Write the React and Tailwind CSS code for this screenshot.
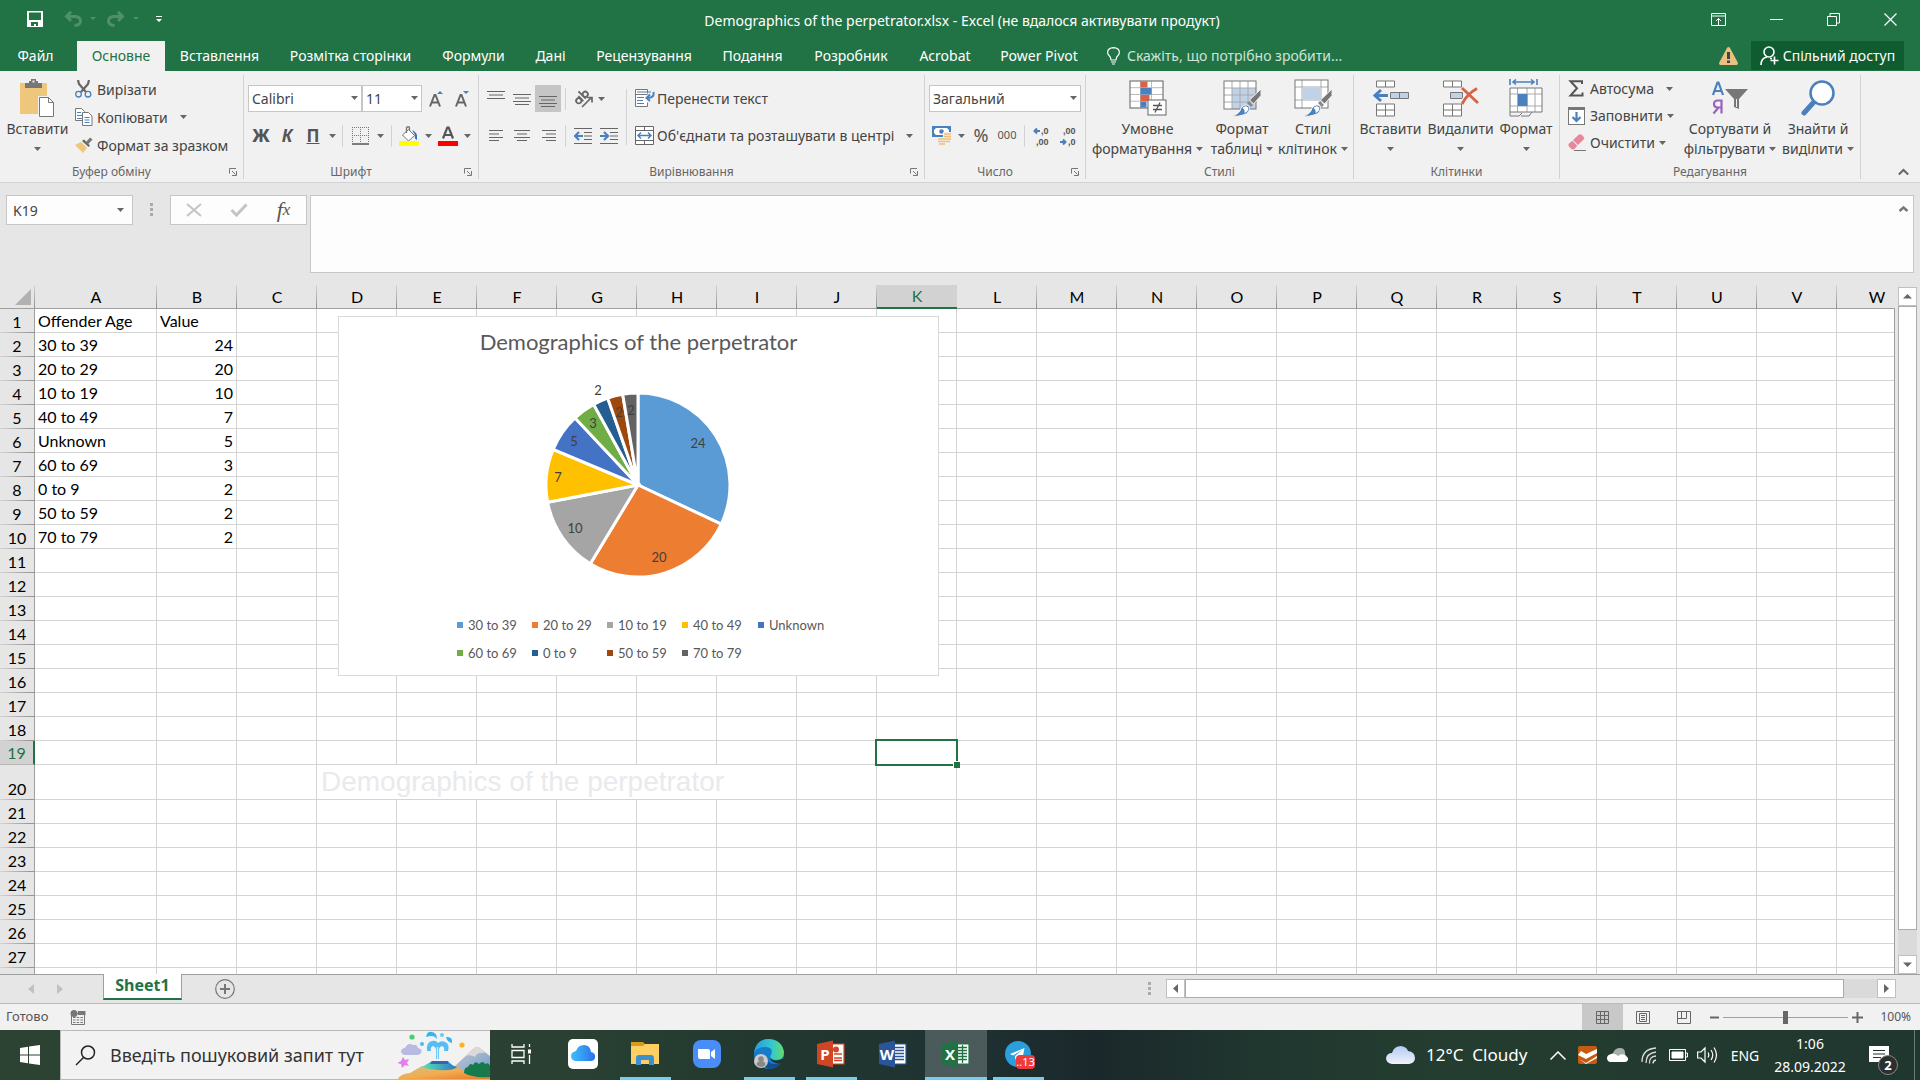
import React from "react";

const UI = "font-['Noto_Sans',sans-serif]";

const Caret = ({ className = "" }) => (
  <svg className={`shrink-0 ${className}`} width="7" height="4" viewBox="0 0 7 4" fill="#666" aria-hidden="true">
    <path d="M0 0h7L3.5 4z" />
  </svg>
);

const Sep = ({ className = "" }) => <div className={`w-px bg-[#d2d2d2] shrink-0 ${className}`} />;

const Launcher = () => (
  <svg width="8" height="8" viewBox="0 0 8 8" fill="none" stroke="#777" aria-hidden="true">
    <path d="M.5 5.500V.5H7M3 3l3.500 3.500M7.500 3v4.500H3" />
  </svg>
);

/* ---------- ribbon icons ---------- */

const PasteIcon = () => (
  <svg width="35" height="39" viewBox="0 0 35 39">
    <rect x="0" y="4" width="27" height="31" fill="#eec77d" />
    <path d="M5 4h4V2h2V0h5v2h2v2h4v5H5z" fill="#777" />
    <rect x="12.500" y="1.500" width="2" height="2" fill="#f1f1f1" />
    <path d="M18 17h11l6 6v16H18z" fill="#f1f1f1" />
    <path d="M19.500 18.500h9l5 5v14h-14z" fill="#fff" stroke="#777" />
    <path d="M28.500 18.500v5h5" fill="none" stroke="#777" />
  </svg>
);

const CutIcon = () => (
  <svg width="17" height="18" viewBox="0 0 17 18" fill="none">
    <path d="M3 0l1 4 7 8M14 0l-1 4-7 8" stroke="#666" strokeWidth="2.200" />
    <circle cx="3.500" cy="14.200" r="2.800" stroke="#4a80bd" strokeWidth="1.300" />
    <circle cx="13" cy="14.200" r="2.800" stroke="#4a80bd" strokeWidth="1.300" />
  </svg>
);

const CopyIcon = () => (
  <svg width="18" height="18" viewBox="0 0 18 18" fill="none">
    <path d="M.5.500h6l3 3v9h-9z" fill="#fff" stroke="#777" />
    <path d="M2 4.500h4M2 7.500h5M2 10.500h5" stroke="#4a80bd" />
    <path d="M7.500 4.500h6l3.500 3.500v9.500H7.500z" fill="#fff" stroke="#777" />
    <path d="M9.500 9.500h5M9.500 12h5M9.500 14.500h5" stroke="#4a80bd" />
  </svg>
);

const BrushIcon = () => (
  <svg width="18" height="16" viewBox="0 0 18 16">
    <path d="M0 8l6-3 6 6-4 5z" fill="#eec77d" />
    <path d="M7 4l2-1.500 6 6L13.500 10z" fill="#666" />
    <path d="M11 5l4-4.500 2.500 2L13.500 7z" fill="#777" />
  </svg>
);

const GrowIcon = ({ down }) => (
  <svg width="15" height="18" viewBox="0 0 15 18" fill="none">
    <path d="M1 16.500L5.500 5h1L11 16.500M2.800 12.500h6.400" stroke="#666" strokeWidth="2" />
    <path d={down ? "M8 1h6l-3 3z" : "M8 4h6l-3-3z"} fill="#4a80bd" />
  </svg>
);

const BordersIcon = () => (
  <svg width="17" height="18" viewBox="0 0 17 18" fill="none" stroke="#777">
    <path d="M0 .5h17M0 8.500h17M.5 0v16M8.500 0v16M16.500 0v16" strokeDasharray="1 1" />
    <path d="M0 17h17" strokeWidth="1.500" stroke="#555" />
  </svg>
);

const FillIcon = () => (
  <svg width="20" height="20" viewBox="0 0 20 20" fill="none">
    <path d="M3.500 9l6-5.500 6 6-6 5.500z" fill="#fff" stroke="#777" />
    <path d="M7.500 7V1.500q2-1.500 3 0V5" stroke="#777" strokeWidth="1.300" />
    <path d="M13 4q6 2 5 10-3-1-2-5z" fill="#3c71b0" />
    <rect x="0" y="15" width="20" height="5" fill="#ff0" />
  </svg>
);

const FontColorIcon = () => (
  <svg width="20" height="20" viewBox="0 0 20 20" fill="none">
    <path d="M5 12.500L9.300 1.500h1.400L15 12.500M6.600 9h6.800" stroke="#555" strokeWidth="2.200" />
    <rect x="0" y="15" width="20" height="5" fill="#f00" />
  </svg>
);

const Lines = ({ d, w = 18, h = 16 }) => (
  <svg width={w} height={h} viewBox={`0 0 ${w} ${h}`} fill="none" stroke="#666">
    <path d={d} />
  </svg>
);

const AngleIcon = () => (
  <svg width="20" height="20" viewBox="0 0 20 20" fill="none">
    <g transform="rotate(-45 9 9)" stroke="#666" strokeWidth="1.800">
      <circle cx="4" cy="8" r="2.600" />
      <path d="M7 4.500v7M10.500 1v10.500" />
      <circle cx="13.200" cy="8" r="2.600" />
    </g>
    <path d="M8 18l9-9M13 8.500h5v5" stroke="#666" strokeWidth="1.700" />
  </svg>
);

const IndentIcon = ({ out }) => (
  <svg width="18" height="16" viewBox="0 0 18 16" fill="none">
    <path d="M0 .5h18M10 4.500h8M10 8h8M10 11.500h8M0 15.500h18" stroke="#666" />
    <path d={out ? "M9 8H2M5 4L1 8l4 4" : "M0 8h7M4 4l4 4-4 4"} stroke="#4a80bd" strokeWidth="2.200" />
  </svg>
);

const WrapIcon = () => (
  <svg width="20" height="19" viewBox="0 0 20 19" fill="none">
    <path d="M12.500 4.500V.5H.5v17h12v-4M.5 5.500h12" fill="#fff" stroke="#777" />
    <path d="M2 3h14M2 8.500h7M2 11.500h6M2 14.500h7" stroke="#4a80bd" />
    <path d="M18.500 3q1 6-6 6M15 5.500L11.500 9l3.500 3" stroke="#4a80bd" strokeWidth="2" />
  </svg>
);

const MergeIcon = () => (
  <svg width="19" height="19" viewBox="0 0 19 19" fill="none">
    <path d="M.5.500h18v18H.5zM.5 4.500h18M.5 14.500h18M9.500 0v4.500M9.500 14.500V19" fill="#fff" stroke="#666" />
    <path d="M3 9.500h13M6 6.500l-3 3 3 3M13 6.500l3 3-3 3" stroke="#4a80bd" strokeWidth="1.500" />
  </svg>
);

const MoneyIcon = () => (
  <svg width="20" height="19" viewBox="0 0 20 19" fill="none">
    <rect x="0" y="0" width="19" height="11" fill="#4a80bd" />
    <path d="M4 2h11l2 2v4l-2 1H4L2 7V4z" fill="#fff" />
    <circle cx="9.500" cy="5.500" r="2.300" fill="#4a80bd" />
    <path d="M11 6h9v12H5v-7h6z" fill="#f1f1f1" />
    <path d="M12 8h7M12 10.500h7M12 13h7M12 15.500h6M6 13h8M6 15.500h8M7 18h6" stroke="#eec07a" strokeWidth="1.700" />
  </svg>
);

const DecimalIcon = ({ more }) => (
  <svg width="20" height="26" viewBox="0 0 20 26" fontFamily="Liberation Sans" fontSize="9" fontWeight="700" fill="#555">
    {more ? (
      <>
        <path d="M8 8H2.500M5 5.500L2.500 8 5 10.500" fill="none" stroke="#4a80bd" strokeWidth="2" />
        <text x="9" y="11">,0</text>
        <text x="4" y="22">,00</text>
      </>
    ) : (
      <>
        <text x="4" y="11">,00</text>
        <path d="M1 19h5.500M4 16.500L6.500 19 4 21.500" fill="none" stroke="#4a80bd" strokeWidth="2" />
        <text x="9" y="22">,0</text>
      </>
    )}
  </svg>
);

const CondIcon = () => (
  <svg width="38" height="36" viewBox="0 0 38 36" fill="none">
    <rect x="1" y="1" width="33" height="27" fill="#fff" />
    <path d="M11.500 1v27M22.500 1v27M1 7.700h33M1 14.500h33M1 21.200h33" stroke="#bbb" />
    <rect x="1" y="1" width="33" height="27" stroke="#777" strokeWidth="1.200" />
    <path d="M11.500 1.500h7v6h-7zM11.500 15h9v6h-9z" fill="#da6143" />
    <path d="M11.500 8h11v6.500h-11zM11.500 21.500h6v6h-6z" fill="#4a80bd" />
    <rect x="19" y="20" width="18" height="15" fill="#fff" stroke="#666" />
    <path d="M24 25.500h9M24 29.500h9M31 22.500l-5 10" stroke="#555" strokeWidth="1.300" />
  </svg>
);

const StyleBrush = () => (
  <>
    <path d="M38 9v6.500L30.500 24l-4-4z" fill="#777" stroke="#f1f1f1" />
    <path d="M26 21l4 4-2 2-4-4z" fill="#888" />
    <path d="M9 36q8-2 9-8 4-5 8-2 2 7-6 9-5 2-11 1z" fill="#4a80bd" stroke="#f1f1f1" />
    <path d="M19.500 28q3-3 5.500-.5 1 4-3.500 5.500.5-3.500-2-5z" fill="#fff" />
  </>
);

const TableIcon = () => (
  <svg width="38" height="37" viewBox="0 0 38 37" fill="none">
    <rect x="1" y="1" width="32" height="28" fill="#fff" />
    <rect x="9" y="8" width="24" height="21" fill="#bfd2e8" />
    <path d="M9 1v28M17 1v28M25 1v28M1 8h32M1 15h32M1 22h32" stroke="#aaa" />
    <rect x="1" y="1" width="32" height="28" stroke="#777" />
    <StyleBrush />
  </svg>
);

const CellStyleIcon = () => (
  <svg width="38" height="38" viewBox="0 0 38 38" fill="none">
    <rect x="1" y="1" width="33" height="28" fill="#fff" />
    <path d="M8 1v28M27 1v28M1 8h33M1 21h33" stroke="#aaa" />
    <rect x="8.500" y="8.500" width="18" height="12" fill="#bfd2e8" />
    <rect x="1" y="1" width="33" height="28" stroke="#777" />
    <g transform="translate(0 1)"><StyleBrush /></g>
  </svg>
);

const MiniTables = () => (
  <>
    <path d="M3.500 1h18v6h-18zM12.500 1v6M3.500 24h18v12h-18zM3.500 30h18M12.500 24v12" fill="#fff" stroke="#777" />
    <path d="M17.500 12.500h18v6h-18zM26.500 12.500v6" fill="#bfd2e8" stroke="#777" />
  </>
);

const InsertCellsIcon = () => (
  <svg width="36" height="37" viewBox="0 0 36 37" fill="none">
    <MiniTables />
    <path d="M15 15.500H3M8 10l-6 5.500L8 21" stroke="#4a80bd" strokeWidth="3" />
  </svg>
);

const DeleteCellsIcon = () => (
  <svg width="36" height="37" viewBox="0 0 36 37" fill="none">
    <g transform="translate(-3 0)">
      <path d="M3.500 1h18v6h-18zM12.500 1v6M3.500 24h18v12h-18zM3.500 30h18M12.500 24v12" fill="#fff" stroke="#777" />
      <path d="M10.500 12.500h12v6h-12z" fill="#bfd2e8" stroke="#777" />
    </g>
    <path d="M19 8l16 15M34 8.500Q24 14 19 24" stroke="#f1f1f1" strokeWidth="5" />
    <path d="M19 8l16 15M34 8.500Q24 14 19 24" stroke="#da6143" strokeWidth="2.800" />
  </svg>
);

const FormatCellsIcon = () => (
  <svg width="35" height="38" viewBox="0 0 35 38" fill="none">
    <path d="M1 0v6M28 0v6M4 3h21M7 .5L4 3l3 2.500M22 .5L25 3l-3 2.500" stroke="#4a80bd" strokeWidth="1.600" />
    <rect x="1" y="9" width="32" height="24" fill="#fff" />
    <path d="M8.500 9v24M18 9v24M26 9v24M1 15h32M1 27h32" stroke="#aaa" />
    <path d="M1 9h32v24H1zM1 33v4h9l3-3M12 37h8l3-4" stroke="#777" />
    <rect x="9" y="15" width="9.500" height="12" fill="#4a80bd" />
  </svg>
);

const SortIcon = () => (
  <svg width="36" height="34" viewBox="0 0 36 34" fill="none">
    <path d="M1 14L5.500 1.500h1L11 14M3 10h6" stroke="#4a80bd" strokeWidth="2.200" />
    <path d="M9.500 32.500v-13H6q-4 0-4 3.500t4 3.500h3.500M6.500 26.500l-5 6" stroke="#9a63bd" strokeWidth="2.200" />
    <path d="M13 8h23l-9 10v10l-5-2v-8z" fill="#777" />
    <path d="M24.500 18v8" stroke="#f1f1f1" />
  </svg>
);

const FindIcon = () => (
  <svg width="35" height="36" viewBox="0 0 35 36" fill="none">
    <path d="M12 23L3 33" stroke="#4a80bd" strokeWidth="5" strokeLinecap="round" />
    <circle cx="21" cy="13" r="11.500" fill="#fff" stroke="#4a80bd" strokeWidth="2.500" />
  </svg>
);

const SigmaIcon = () => (
  <svg width="16" height="17" viewBox="0 0 16 17" fill="none" stroke="#555" strokeWidth="2">
    <path d="M14 4V1.200H2.500L9 8.200 2.500 15.500H14.500v-3" />
  </svg>
);

const DownFillIcon = () => (
  <svg width="17" height="18" viewBox="0 0 17 18" fill="none">
    <rect x=".5" y="1" width="16" height="16.500" fill="#fff" stroke="#777" />
    <rect x="0" y="0" width="17" height="3" fill="#777" />
    <path d="M8.500 5v9M4.500 10l4 4 4-4" stroke="#4a80bd" strokeWidth="2.200" />
  </svg>
);

const EraserIcon = () => (
  <svg width="18" height="17" viewBox="0 0 18 17">
    <path d="M5 6l6-5.500Q13-.5 15 2t1 3l-6 6z" fill="#e8869a" />
    <path d="M4.300 6.800l5 5L6 15.500H4L.5 12v-2z" fill="#e8869a" />
    <path d="M6 16.500h12" stroke="#777" />
  </svg>
);

/* ---------- ribbon parts ---------- */

const Group = ({ label, className, launcher, children }) => (
  <section className={`shrink-0 mt-1 mb-[3px] flex flex-col border-r border-[#d2d2d2] ${className}`}>
    <div className="flex-1 min-h-0 flex">{children}</div>
    <div className="h-[15px] flex items-center relative text-[12px] leading-4 text-[#666]">
      <div className={`flex-1 text-center ${launcher ? "pr-5" : ""}`}>{label}</div>
      {launcher && (
        <button aria-label={`${label}: параметри`} className="absolute right-[6px] top-1">
          <Launcher />
        </button>
      )}
    </div>
  </section>
);

const BigButton = ({ icon, l1, l2, className }) => (
  <button className={`flex flex-col items-center shrink-0 pt-[2px] text-[14px] leading-5 text-[#444] whitespace-nowrap ${className}`}>
    <span className="h-[42px] flex items-center justify-center">{icon}</span>
    <span>{l1}</span>
    <span className="h-5 flex items-center gap-1">
      {l2}
      <Caret />
    </span>
  </button>
);

const SmallButton = ({ icon, label, caret, gap = "ml-2", className }) => (
  <button className={`flex items-center text-[14px] text-[#444] whitespace-nowrap ${className}`}>
    <span className="w-[22px] flex shrink-0">{icon}</span>
    {label}
    {caret && <Caret className={gap} />}
  </button>
);

const Combo = ({ value, label, className }) => (
  <div className={`relative h-[27px] ${className}`}>
    <select
      aria-label={label}
      defaultValue={value}
      className="appearance-none w-full h-full bg-white border border-[#c6c6c6] pl-[3px] text-[14px] leading-5 text-[#444]"
    >
      <option>{value}</option>
    </select>
    <Caret className="absolute right-1 top-[11px] pointer-events-none" />
  </div>
);

const Tool = ({ label, className, children }) => (
  <button aria-label={label} className={`h-[27px] shrink-0 flex items-center justify-center text-[#555] ${className}`}>
    {children}
  </button>
);

const tabs = [
  ["Основне", "w-[88px] bg-[#f1f1f1] text-[#217346]"],
  ["Вставлення", "w-[109px]"],
  ["Розмітка сторінки", "w-[153px]"],
  ["Формули", "w-[93px]"],
  ["Дані", "w-[61px]"],
  ["Рецензування", "w-[126px]"],
  ["Подання", "w-[91px]"],
  ["Розробник", "w-[106px]"],
  ["Acrobat", "w-[82px]"],
  ["Power Pivot", "w-[106px]"],
];

const UndoIcon = ({ flip }) => (
  <svg width="18" height="16" viewBox="0 0 18 16" fill="none" stroke="#4f9069" strokeWidth="3" className={flip ? "-scale-x-100" : ""}>
    <path d="M3 5.500h8q5.500.5 5.500 4.500t-6 4.500M7 .8L2.500 5.500 7 10" />
  </svg>
);

const TitleBar = () => (
  <header className="h-[41px] flex items-center text-white">
    <div className="flex-1 flex items-center pl-[27px] pb-1">
      <button aria-label="Зберегти" className="mr-[21px]">
        <svg width="16" height="16" viewBox="0 0 16 16" fill="none">
          <path d="M0 0h16v16H0z" fill="#fff" />
          <path d="M2 1.500h12V9H2zM4 11h7v4H9v-2H7v2H4z" fill="#217346" />
        </svg>
      </button>
      <button aria-label="Скасувати" className="flex items-center gap-2">
        <UndoIcon />
        <svg width="6" height="3" viewBox="0 0 6 3" fill="#4f9069"><path d="M0 0h6L3 3z" /></svg>
      </button>
      <button aria-label="Повторити" className="ml-[11px] flex items-center gap-2">
        <UndoIcon flip />
        <svg width="6" height="3" viewBox="0 0 6 3" fill="#4f9069"><path d="M0 0h6L3 3z" /></svg>
      </button>
      <button aria-label="Настроїти панель" className="ml-[17px]">
        <svg width="6" height="6" viewBox="0 0 6 6" fill="#fff"><path d="M0 0h6v1H0zM0 3h6L3 6z" /></svg>
      </button>
    </div>
    <h1 className="text-[14px] leading-5 whitespace-nowrap">Demographics of the perpetrator.xlsx - Excel (не вдалося активувати продукт)</h1>
    <div className="flex-1 flex items-center justify-end pr-[23px] pb-[3px] gap-[44px]">
      <button aria-label="Параметри стрічки">
        <svg width="15" height="13" viewBox="0 0 15 13" fill="none" stroke="#fff"><path d="M.5.500h14v12H.5zM0 3h15M7.500 12V5.500M5 8l2.500-2.500L10 8" /></svg>
      </button>
      <button aria-label="Згорнути">
        <svg width="13" height="13" viewBox="0 0 13 13" stroke="#fff"><path d="M0 6.500h13" /></svg>
      </button>
      <button aria-label="Відновити">
        <svg width="13" height="13" viewBox="0 0 13 13" fill="none" stroke="#fff"><path d="M.5 3.500h9v9h-9zM3 3V.5h9.500V10H10" /></svg>
      </button>
      <button aria-label="Закрити">
        <svg width="13" height="13" viewBox="0 0 13 13" stroke="#fff" strokeWidth="1.200"><path d="M.5.500l12 12M12.500.500l-12 12" /></svg>
      </button>
    </div>
  </header>
);

const TabBar = () => (
  <nav className="h-[30px] flex text-white text-[14px] leading-5 whitespace-nowrap">
    <button className="w-[77px] pr-[6px]">Файл</button>
    {tabs.map(([t, c]) => (
      <button key={t} className={`shrink-0 ${c}`}>{t}</button>
    ))}
    <label className="flex items-center ml-[15px] gap-[7px] text-[#cfe3d7]">
      <svg width="13" height="18" viewBox="0 0 13 18" fill="none" stroke="#fff" strokeWidth="1.200">
        <path d="M4 13q0-3-2-4.500Q.6 7 .6 5.500.8.700 6.500.6q5.700.1 5.900 4.900 0 1.500-1.400 3Q9 10 9 13zM4 15h5M5 17h3" />
      </svg>
      <input className="w-[240px] bg-transparent placeholder:text-[#cfe3d7] outline-none" placeholder="Скажіть, що потрібно зробити..." />
    </label>
    <div className="flex-1" />
    <button aria-label="Попередження" className="mr-[13px]">
      <svg width="19" height="18" viewBox="0 0 19 18">
        <path d="M9.500 0q1 0 1.500 1l8 15q0 2-1.500 2h-16Q0 18 0 16L8 1q.5-1 1.500-1z" fill="#e9c07f" />
        <path d="M8 5h3v7H8zM8 13.500h3V16H8z" fill="#444" />
      </svg>
    </button>
    <button className="bg-[#0e5c2f] h-[29px] w-[153px] mr-4 flex items-center justify-center gap-1">
      <svg width="19" height="20" viewBox="0 0 19 20" fill="none" stroke="#fff" strokeWidth="1.600">
        <circle cx="9" cy="6" r="5" />
        <path d="M1 19q0-7 6-8M10 12.500l2 0M14.500 10.500v8M10.500 14.500h8" />
      </svg>
      Спільний доступ
    </button>
  </nav>
);

const Ribbon = () => (
  <div className="h-[112px] bg-[#f1f1f1] border-b border-[#d2d2d2] flex">
    <Group label="Буфер обміну" launcher className="w-[244px]">
      <BigButton icon={<PasteIcon />} l1="Вставити" className="w-[75px]" />
      <div className="flex flex-col">
        <SmallButton icon={<CutIcon />} label="Вирізати" className="h-7" />
        <SmallButton icon={<CopyIcon />} label="Копіювати" caret gap="ml-3" className="h-7" />
        <SmallButton icon={<BrushIcon />} label="Формат за зразком" className="h-7" />
      </div>
    </Group>

    <Group label="Шрифт" launcher className="w-[235px]">
      <div className="flex flex-col pt-[10px] pl-1 gap-[10px]">
        <div className="flex">
          <Combo label="Шрифт" value="Calibri" className="w-[114px]" />
          <Combo label="Розмір шрифту" value="11" className="w-[60px]" />
          <Tool label="Збільшити розмір" className="w-[28px]"><GrowIcon /></Tool>
          <Tool label="Зменшити розмір" className="w-[25px]"><GrowIcon down /></Tool>
        </div>
        <div className="flex items-center">
          <Tool label="Жирний" className="w-[26px] text-[17px] font-extrabold">Ж</Tool>
          <Tool label="Курсив" className="w-[26px] text-[17px] font-bold italic">К</Tool>
          <Tool label="Підкреслений" className="w-[26px] text-[17px] font-bold underline">П</Tool>
          <Tool label="Види підкреслення" className="w-[12px]"><Caret /></Tool>
          <Sep className="h-[22px] ml-1" />
          <Tool label="Межі" className="w-[34px]"><BordersIcon /></Tool>
          <Tool label="Види меж" className="w-[6px]"><Caret /></Tool>
          <Sep className="h-[22px] ml-2" />
          <Tool label="Колір заливки" className="w-[33px]"><FillIcon /></Tool>
          <Tool label="Вибір заливки" className="w-[6px]"><Caret /></Tool>
          <Tool label="Колір тексту" className="w-[33px]"><FontColorIcon /></Tool>
          <Tool label="Вибір кольору" className="w-[6px]"><Caret /></Tool>
        </div>
      </div>
    </Group>

    <Group label="Вирівнювання" launcher className="w-[446px]">
      <div className="flex flex-col pt-[10px] pl-1 gap-[10px] w-[147px]">
        <div className="flex items-center">
          <Tool label="Зверху" className="w-[26px]"><Lines d="M0 4.500h18M2 8h14M0 11.500h18" h={24} /></Tool>
          <Tool label="Посередині" className="w-[26px]"><Lines d="M0 4.500h18M2 8h14M0 11.500h18M2 14.500h14" h={17} /></Tool>
          <Tool label="Знизу" className="w-[26px] bg-[#c5c5c5]"><Lines d="M0 6.500h18M2 10h14M0 13.500h18M2 16.500h14" h={17} /></Tool>
          <Sep className="h-[22px] ml-1" />
          <Tool label="Орієнтація" className="w-[42px] gap-1 pl-1"><AngleIcon /><Caret /></Tool>
        </div>
        <div className="flex items-center">
          <Tool label="Ліворуч" className="w-[26px]"><Lines d="M2 2.500h14M2 6h10M2 9.500h14M2 12.500h10" /></Tool>
          <Tool label="По центру" className="w-[26px]"><Lines d="M1 2.500h16M4 6h10M1 9.500h16M4 12.500h10" /></Tool>
          <Tool label="Праворуч" className="w-[26px]"><Lines d="M3 2.500h14M7 6h10M3 9.500h14M7 12.500h10" /></Tool>
          <Sep className="h-[22px] ml-1" />
          <Tool label="Зменшити відступ" className="w-[26px] ml-1"><IndentIcon out /></Tool>
          <Tool label="Збільшити відступ" className="w-[26px]"><IndentIcon /></Tool>
        </div>
      </div>
      <Sep className="h-14 mt-[14px]" />
      <div className="flex flex-col pt-[10px] pl-2 gap-[10px]">
        <SmallButton icon={<WrapIcon />} label="Перенести текст" className="h-[27px]" />
        <SmallButton icon={<MergeIcon />} label="Об'єднати та розташувати в центрі" caret gap="ml-3" className="h-[27px]" />
      </div>
    </Group>

    <Group label="Число" launcher className="w-[161px]">
      <div className="flex flex-col pt-[10px] pl-1 gap-[10px]">
        <Combo label="Числовий формат" value="Загальний" className="w-[152px]" />
        <div className="flex items-center">
          <Tool label="Грошовий формат" className="w-[26px]"><MoneyIcon /></Tool>
          <Tool label="Валюти" className="w-[13px]"><Caret /></Tool>
          <Tool label="Відсотки" className="w-[26px] text-[18px]">%</Tool>
          <Tool label="Роздільник груп" className="w-[26px] text-[11px]">000</Tool>
          <Sep className="h-[22px] ml-1" />
          <Tool label="Більше знаків" className="w-[34px]"><DecimalIcon more /></Tool>
          <Tool label="Менше знаків" className="w-[20px]"><DecimalIcon /></Tool>
        </div>
      </div>
    </Group>

    <Group label="Стилі" className="w-[268px]">
      <BigButton icon={<CondIcon />} l1="Умовне" l2="форматування" className="w-[123px]" />
      <BigButton icon={<TableIcon />} l1="Формат" l2="таблиці" className="w-[66px]" />
      <BigButton icon={<CellStyleIcon />} l1="Стилі" l2="клітинок" className="w-[76px]" />
    </Group>

    <Group label="Клітинки" className="w-[206px]">
      <BigButton icon={<InsertCellsIcon />} l1="Вставити" className="w-[73px]" />
      <BigButton icon={<DeleteCellsIcon />} l1="Видалити" className="w-[67px]" />
      <BigButton icon={<FormatCellsIcon />} l1="Формат" className="w-[64px]" />
    </Group>

    <Group label="Редагування" className="w-[301px]">
      <div className="flex flex-col pl-2 w-[118px]">
        <SmallButton icon={<SigmaIcon />} label="Автосума" caret gap="ml-3" className="h-[27px]" />
        <SmallButton icon={<DownFillIcon />} label="Заповнити" caret gap="ml-1" className="h-[27px]" />
        <SmallButton icon={<EraserIcon />} label="Очистити" caret gap="ml-1" className="h-[27px]" />
      </div>
      <BigButton icon={<SortIcon />} l1="Сортувати й" l2="фільтрувати" className="w-[104px]" />
      <BigButton icon={<FindIcon />} l1="Знайти й" l2="виділити" className="w-[72px]" />
    </Group>

    <div className="flex-1 flex justify-end items-end pr-[11px] pb-[6px]">
      <button aria-label="Згорнути стрічку">
        <svg width="11" height="8" viewBox="0 0 11 8" fill="none" stroke="#666" strokeWidth="2"><path d="M.8 6.500l4.700-4.500 4.700 4.500" /></svg>
      </button>
    </div>
  </div>
);

const Dots = () => (
  <svg width="3" height="13" viewBox="0 0 3 13" fill="#aaa" className="shrink-0"><path d="M0 0h3v3H0zM0 5h3v3H0zM0 10h3v3H0z" /></svg>
);

const fxBtn = "w-[45px] h-full flex items-center justify-center";

const FormulaBar = () => (
  <div className="flex items-start pt-3 pb-3 px-[6px]">
    <div className="relative w-[127px] h-[30px] shrink-0">
      <input aria-label="Ім'я" defaultValue="K19" className="w-full h-full bg-[#fdfdfd] border border-[#c6c6c6] pl-[6px] text-[14px] text-[#444]" />
      <Caret className="absolute right-[9px] top-[13px]" />
    </div>
    <div className="w-[37px] flex justify-center pt-2"><Dots /></div>
    <div className="w-[137px] h-[30px] shrink-0 bg-[#fdfdfd] border border-[#c6c6c6] flex mr-[3px]">
      <button aria-label="Скасувати" className={fxBtn}>
        <svg width="16" height="14" viewBox="0 0 16 14" stroke="#c4c4c4" strokeWidth="2"><path d="M1 1l14 12M15 1L1 13" /></svg>
      </button>
      <button aria-label="Ввести" className={fxBtn}>
        <svg width="18" height="14" viewBox="0 0 18 14" fill="none" stroke="#c4c4c4" strokeWidth="3"><path d="M1.500 7l5 5L16.500 1.500" /></svg>
      </button>
      <button aria-label="Вставити функцію" className={`${fxBtn} items-baseline font-['Liberation_Serif',serif] italic text-[#555] text-[22px] leading-7`}>
        f<span className="text-[17px]">x</span>
      </button>
    </div>
    <div className="relative flex-1 h-[78px]">
      <textarea aria-label="Рядок формул" className="block w-full h-full resize-none bg-[#fdfdfd] border border-[#c6c6c6]" />
      <svg className="absolute right-[6px] top-[11px]" width="9" height="6" viewBox="0 0 9 6" fill="none" stroke="#777" strokeWidth="2.500"><path d="M.5 5l4-3.500 4 3.500" /></svg>
    </div>
  </div>
);

/* ---------- sheet ---------- */

const cols = "ABCDEFGHIJKLMNOPQRSTUVW".split("");
const data = [
  ["Offender Age", "Value"],
  ["30 to 39", 24],
  ["20 to 29", 20],
  ["10 to 19", 10],
  ["40 to 49", 7],
  ["Unknown", 5],
  ["60 to 69", 3],
  ["0 to 9", 2],
  ["50 to 59", 2],
  ["70 to 79", 2],
];
const colors = ["#5b9bd5", "#ed7d31", "#a5a5a5", "#ffc000", "#4472c4", "#70ad47", "#255e91", "#9e480e", "#636363"];
const labels = [[238, 53], [199, 167], [115, 138], [98, 87], [114, 51], [133, 33], [138, 0], [159, 22], [171, 20]];

const slices = (() => {
  const total = 75;
  let sum = 0;
  return data.slice(1).map(([, v], i) => {
    const a = (sum / total) * 2 * Math.PI;
    sum += v;
    const b = (sum / total) * 2 * Math.PI;
    const p = (t) => `${(178 + 92 * Math.sin(t)).toFixed(2)} ${(95 - 92 * Math.cos(t)).toFixed(2)}`;
    return { d: `M178 95L${p(a)}A92 92 0 0 1 ${p(b)}Z`, fill: colors[i], v };
  });
})();

const Chart = () => (
  <figure className="absolute left-[338px] top-[31px] w-[601px] h-[360px] bg-white border border-[#d9d9d9] flex flex-col items-center text-[#595959] font-['Lato',sans-serif]">
    <figcaption className="mt-[9px] text-[22px] leading-8 whitespace-nowrap">Demographics of the perpetrator</figcaption>
    <svg width="357" height="200" viewBox="0 0 357 200" className="mt-8 overflow-visible">
      {slices.map((s, i) => (
        <path key={i} d={s.d} fill={s.fill} stroke="#fff" strokeWidth="3" />
      ))}
      <g fontSize="13" fill="#404040" textAnchor="middle">
        {slices.map((s, i) => (
          <text key={i} x={labels[i][0]} y={labels[i][1] + 5}>{s.v}</text>
        ))}
      </g>
    </svg>
    <ul className="mt-[21px] grid grid-cols-[75px_75px_75px_76px_62px] text-[13px] leading-7 whitespace-nowrap">
      {data.slice(1).map(([name], i) => (
        <li key={name} className="flex items-center gap-[5px]">
          <svg width="6" height="6" viewBox="0 0 6 6" className="shrink-0"><rect width="6" height="6" fill={colors[i]} /></svg>
          {name}
        </li>
      ))}
    </ul>
  </figure>
);

const Sheet = () => (
  <div className="relative flex-1 overflow-hidden">
    <table className="table-fixed border-separate border-spacing-0 w-[1917px] font-['Lato',sans-serif] text-[16px] leading-[23px] text-black bg-white">
      <colgroup>
        <col className="w-[35px]" />
        <col className="w-[122px]" />
        {cols.slice(1).map((c) => <col key={c} className="w-[80px]" />)}
      </colgroup>
      <thead>
        <tr className="h-6 bg-[#e6e6e6]">
          <th className="p-0 border-b border-[#9f9f9f] bg-[linear-gradient(#d4d4d4,#8f8f8f)] bg-[length:1px_100%] bg-right bg-no-repeat" aria-label="Виділити все">
            <svg width="16" height="16" viewBox="0 0 16 16" className="ml-[15px]"><path d="M16 0v16H0z" fill="#b1b1b1" /></svg>
          </th>
          {cols.map((c) => (
            <th
              key={c}
              scope="col"
              className={`p-0 font-normal border-b bg-no-repeat bg-right ${
                c === "K"
                  ? "bg-[#d2d2d2] text-[#217346] border-b-2 border-[#217346] leading-[22px]"
                  : "border-[#9f9f9f] bg-[linear-gradient(#d4d4d4,#8f8f8f)] bg-[length:1px_100%]"
              }`}
            >
              {c}
            </th>
          ))}
        </tr>
      </thead>
      <tbody>
        {Array.from({ length: 28 }, (_, i) => i + 1).map((r) => (
          <tr key={r} className={r === 20 ? "h-[35px]" : "h-6"}>
            <th
              scope="row"
              className={`p-0 font-normal align-bottom ${
                r === 19
                  ? "bg-[#d2d2d2] text-[#217346] border-r-2 border-r-[#217346] border-b border-b-[#b5b5b5]"
                  : "bg-[#e6e6e6] border-r border-r-[#9f9f9f] bg-[linear-gradient(90deg,#d4d4d4,#8f8f8f)] bg-[length:100%_1px] bg-bottom bg-no-repeat"
              }`}
            >
              {r < 28 && r}
            </th>
            {cols.map((c, ci) => {
              if (r === 20 && ci > 3 && ci < 9) return null;
              if (r === 20 && ci === 3)
                return (
                  <td key={c} colSpan={6} className="p-0 pl-1 border-r border-b border-[#d4d4d4] font-['Liberation_Sans',sans-serif] text-[28px] leading-[34px] text-[#e8eaed] whitespace-nowrap">
                    Demographics of the perpetrator
                  </td>
                );
              const v = ci < 2 && data[r - 1] ? data[r - 1][ci] : null;
              return (
                <td
                  key={c}
                  className={`p-0 px-[3px] border-r border-b border-[#d4d4d4] whitespace-nowrap ${typeof v === "number" ? "text-right" : ""} ${r === 19 && c === "K" ? "relative" : ""}`}
                >
                  {v}
                  {r === 19 && c === "K" && (
                    <span className="absolute -left-[2px] -top-[2px] w-[83px] h-[27px] border-2 border-[#217346]">
                      <span className="absolute -right-[4px] -bottom-[4px] size-[7px] bg-[#217346] border-t border-l border-white" />
                    </span>
                  )}
                </td>
              );
            })}
          </tr>
        ))}
      </tbody>
    </table>
    <Chart />
    <div className="absolute right-0 top-[23px] bottom-0 w-px bg-[#9f9f9f]" />
  </div>
);

const Arrow = ({ d }) => <svg width="9" height="9" viewBox="0 0 9 9" fill="#666"><path d={d} /></svg>;
const scrollBtn = "size-[19px] shrink-0 bg-white border border-[#c0c0c0] flex items-center justify-center";

const SheetTabs = () => (
  <div className="h-[30px] bg-[#e6e6e6] border-t border-t-[#9f9f9f] border-b border-b-[#bdbdbd] flex items-start">
    <div className="w-[103px] h-7 flex items-center pl-[28px] gap-[23px]">
      <button aria-label="Попередній аркуш"><svg width="6" height="10" viewBox="0 0 6 10" fill="#c0c0c0"><path d="M6 0v10L0 5z" /></svg></button>
      <button aria-label="Наступний аркуш"><svg width="6" height="10" viewBox="0 0 6 10" fill="#c0c0c0"><path d="M0 0v10l6-5z" /></svg></button>
    </div>
    <button className="-mt-px w-[79px] h-[26px] pb-[3px] bg-white border-x border-x-[#9f9f9f] border-b-2 border-b-[#217346] text-[#217346] font-bold text-[16px] leading-5">
      Sheet1
    </button>
    <button aria-label="Новий аркуш" className="ml-[33px] mt-1">
      <svg width="20" height="20" viewBox="0 0 20 20" fill="none" stroke="#777"><circle cx="10" cy="10" r="9.300" strokeWidth="1.200" /><path d="M10 5v10M5 10h10" strokeWidth="2" /></svg>
    </button>
    <div className="flex-1" />
    <div className="mt-[7px] mr-[15px]"><Dots /></div>
    <div className="w-[38%] mt-1 mr-6 flex">
      <button aria-label="Прокрутити ліворуч" className={scrollBtn}><Arrow d="M7 0v9L2 4.500z" /></button>
      <div className="flex-1 bg-[#dadada] flex">
        <div className="w-[calc(100%-33px)] bg-white border border-[#ababab]" />
      </div>
      <button aria-label="Прокрутити праворуч" className={scrollBtn}><Arrow d="M2 0v9l5-4.500z" /></button>
    </div>
  </div>
);

const StatusBar = () => (
  <div className="h-[26px] bg-[#f1f1f1] flex items-center text-[#555] text-[13px]">
    <span className="w-[63px] pl-[6px]">Готово</span>
    <button aria-label="Запис макросу" className="ml-[7px]">
      <svg width="16" height="15" viewBox="0 0 16 15" fill="none"><path d="M1.500 3.500h13v11h-13z" stroke="#777" /><path d="M8 1h7.500v4H8z" fill="#777" /><circle cx="4" cy="3.500" r="3.500" fill="#777" /><path d="M3 7.500h10M3 10h10M3 12.500h10" stroke="#777" strokeDasharray="2.500 1.200" /></svg>
    </button>
    <div className="flex-1" />
    <button aria-label="Звичайний" className="w-[41px] h-full bg-[#c8c8c8] flex items-center justify-center mr-[13px]">
      <svg width="13" height="13" viewBox="0 0 13 13" fill="none" stroke="#666"><path d="M.5.500h12v12H.5zM4.500 0v13M8.500 0v13M0 4.500h13M0 8.500h13" /></svg>
    </button>
    <button aria-label="Розмітка сторінки" className="mr-[27px]">
      <svg width="14" height="13" viewBox="0 0 14 13" fill="none" stroke="#666"><path d="M.5.500h13v12H.5zM3.500 2.500h7v8h-7zM5 4.500h4M5 6.500h4M5 8.500h4" /></svg>
    </button>
    <button aria-label="Сторінковий" className="mr-[19px]">
      <svg width="14" height="13" viewBox="0 0 14 13" fill="none" stroke="#666"><path d="M.5.500h13v12H.5zM4.500.500v7M9.500.500v7M0 7.500h9.500" /></svg>
    </button>
    <button aria-label="Зменшити"><svg width="9" height="9" viewBox="0 0 9 9" stroke="#666" strokeWidth="2"><path d="M0 4.500h9" /></svg></button>
    <input
      type="range"
      aria-label="Масштаб"
      defaultValue="50"
      className="appearance-none bg-transparent w-[125px] h-[13px] mx-1 [&::-webkit-slider-runnable-track]:h-px [&::-webkit-slider-runnable-track]:bg-[#a0a0a0] [&::-webkit-slider-thumb]:appearance-none [&::-webkit-slider-thumb]:w-[5px] [&::-webkit-slider-thumb]:h-[13px] [&::-webkit-slider-thumb]:-mt-[6px] [&::-webkit-slider-thumb]:bg-[#666]"
    />
    <button aria-label="Збільшити"><svg width="11" height="11" viewBox="0 0 11 11" stroke="#666" strokeWidth="2"><path d="M0 5.500h11M5.500 0v11" /></svg></button>
    <span className="w-[57px] pr-[9px] text-right text-[12px]">100%</span>
  </div>
);

/* ---------- taskbar ---------- */

const Landscape = () => (
  <svg width="92" height="48" viewBox="0 0 92 48" className="shrink-0">
    <defs>
      <linearGradient id="hill" x1="0" x2="1" y1="0" y2="1"><stop offset="0" stopColor="#c9c08a" /><stop offset=".5" stopColor="#f2ad4e" /><stop offset="1" stopColor="#e8772a" /></linearGradient>
      <linearGradient id="mount" x1="0" x2="1" y1="0" y2="1"><stop offset="0" stopColor="#c6c6cc" /><stop offset="1" stopColor="#6f9fd0" /></linearGradient>
      <linearGradient id="pool" x1="0" x2="1"><stop offset="0" stopColor="#5ee0b0" /><stop offset="1" stopColor="#2a78c8" /></linearGradient>
    </defs>
    <path d="M56 36l19-18q4-4 8 0l9 7v23H56z" fill="url(#mount)" />
    <path d="M68 25l7-7q4-4 8 0l4 4q-8-1-10 4-4-3-9-1z" fill="#dcdad9" />
    <path d="M0 48q2-5 12-6l12-7h34q10 9 34 10v3z" fill="url(#hill)" />
    <path d="M24 36l10-6h16q4 5 9 6-5 4-18 3t-17-3z" fill="url(#pool)" />
    <path d="M34 30h16v3H32z" fill="#3566ad" />
    <path d="M66 42q0-6 4-6 2-5 5-2 2-5 6-1 4-4 6 0 4-2 5 2v11q-18 1-26-4z" fill="#167a4c" />
    <path d="M29 20q-1-9 5-10 4-1 6 2 3-3 7-1 5 2 3 9h-4q1-4-2-5-3 1-3 4v9h-3v-9q0-3-3-4-3 1-2 5z" fill="#55bdf3" />
    <path d="M39.500 28V16" stroke="#c4efff" strokeWidth="1.500" />
    <path d="M28 6q1-6 6-5 5 1 5 7-2-3-5-3-3 0-6 1zM48 6q7-1 6 6-5-1-6-6z" fill="#35b5ee" />
    <circle cx="44" cy="4" r="2" fill="#68caf5" /><circle cx="24" cy="13" r="2" fill="#3fc0ef" />
    <circle cx="14" cy="6" r="2.600" fill="#48cf75" /><circle cx="64" cy="14" r="2.600" fill="#ffb319" />
    <path d="M3 20q1-3 4-3 3-6 8-3 4-1 5 3 5 1 3 5-1 2-4 2H7q-4-1-4-4z" fill="#b9b9e2" />
    <path d="M5 26l2 3 4-1-2 4 2 3-4-1-3 3-1-4-4-1 4-2z" fill="#e57cf0" />
  </svg>
);

const Slot = ({ label, open, className = "", children }) => (
  <button aria-label={label} className={`w-[62px] h-full shrink-0 flex flex-col items-center ${className}`}>
    <span className="flex-1 flex items-center pt-[1px]">{children}</span>
    <span className={`h-[3px] ${open ? "w-[51px] bg-[#76ceef]" : "w-0"}`} />
  </button>
);

const Office = ({ color, dark, letter, children }) => (
  <svg width="28" height="28" viewBox="0 0 28 28">
    <path d="M13 4h14v20H13z" fill="#fff" stroke={color} strokeWidth="1.200" />
    {children}
    <path d="M0 4l16-3.500v27L0 24z" fill={dark} />
    <text x="8" y="19.500" textAnchor="middle" fontFamily="Open Sans" fontWeight="700" fontSize="15" fill="#fff">{letter}</text>
  </svg>
);

const Taskbar = () => (
  <footer className="h-[50px] flex items-stretch text-white bg-[linear-gradient(90deg,#2c4232_0%,#294033_30%,#21372f_42%,#1f3233_50%,#1b282b_57%,#20372f_66%,#243d30_75%,#20372f_100%)]">
    <button aria-label="Пуск" className="w-[60px] flex items-center justify-center">
      <svg width="20" height="20" viewBox="0 0 20 20" fill="#fff"><path d="M0 3l8-1.200v7.700H0zM9 1.600L20 0v9.500H9zM0 10.500h8v7.700L0 17zM9 10.500h11V20L9 18.400z" /></svg>
    </button>
    <label className="w-[430px] bg-[#f2f2f2] border border-[#b9b9b9] border-r-0 flex items-center pl-[14px]">
      <svg width="21" height="21" viewBox="0 0 21 21" fill="none" stroke="#222" strokeWidth="1.500" className="shrink-0"><circle cx="13" cy="7.500" r="6.500" /><path d="M8.500 12.500L1 20" /></svg>
      <input className="ml-[14px] flex-1 min-w-0 bg-transparent text-[18px] placeholder:text-[#333] outline-none" placeholder="Введіть пошуковий запит тут" />
      <Landscape />
    </label>
    <Slot label="Подання завдань">
      <svg width="21" height="20" viewBox="0 0 21 20" fill="none" stroke="#fff" strokeWidth="1.300"><path d="M1 0v3h12V0M1 6.500h12v7H1zM1 20v-3h12v3M18.500 0v3M18.500 11v9" /><path d="M17 5.500h3v4h-3z" fill="#fff" stroke="none" /></svg>
    </Slot>
    <Slot label="iCloud">
      <svg width="30" height="30" viewBox="0 0 30 30"><defs><linearGradient id="ic" x1="0" x2="1"><stop offset="0" stopColor="#3ec0fb" /><stop offset="1" stopColor="#2b71ea" /></linearGradient></defs><rect width="30" height="30" rx="5" fill="#fff" /><path d="M7 22q-4-1-4-5t5-5q2-6 8-6t7 7q5 1 4 6-1 3-4 3z" fill="url(#ic)" /></svg>
    </Slot>
    <Slot label="Провідник" open>
      <svg width="28" height="24" viewBox="0 0 28 24"><path d="M0 0h12l2 2v4H0z" fill="#d99a1c" /><path d="M0 4h12l2-2h14v20H0z" fill="#fcd063" /><path d="M5 23v-7q0-3 3-3h12q3 0 3 3v7h-5v-5h-8v5z" fill="#3e8fd0" /></svg>
    </Slot>
    <Slot label="Zoom">
      <svg width="28" height="28" viewBox="0 0 28 28"><rect width="28" height="28" rx="8" fill="#4a8cf8" /><path d="M5 9h10q2 0 2 2v8H7q-2 0-2-2zM18 12l4-3v10l-4-3z" fill="#fff" /></svg>
    </Slot>
    <Slot label="Microsoft Edge" open>
      <svg width="30" height="30" viewBox="0 0 30 30">
        <defs><linearGradient id="ed" x1="0" x2="1"><stop offset="0" stopColor="#2a9ae0" /><stop offset=".6" stopColor="#36c8cc" /><stop offset="1" stopColor="#65db6c" /></linearGradient></defs>
        <circle cx="15" cy="15" r="15" fill="#147ccb" />
        <path d="M0 14Q2 0 15 0q13 1 15 13 0 8-8 8-5 0-6-3 5-9-4-10Q3 8 0 14z" fill="url(#ed)" />
        <path d="M12 17q1 9 10 8 5 0 6-2-4 7-13 7-8-3-3-13z" fill="#104f91" />
        <path d="M16 18q1 3 6 3.500 4 0 7-2l1.500 1-2.500 3.500q-4 1.500-8-.5-4-2-4-5.500z" fill="#20352f" />
        <circle cx="7" cy="22" r="7" fill="#ccc" /><circle cx="7" cy="20" r="2.800" fill="#888" /><path d="M2.500 26q0-4 4.500-4t4.500 4q-4 4-9 0z" fill="#888" />
      </svg>
    </Slot>
    <Slot label="PowerPoint" open>
      <Office color="#d24625" dark="#d04525" letter="P"><path d="M17 14h8M17 18h8M17 20.500h8" stroke="#d24625" strokeWidth="1.500" /><circle cx="19" cy="9.500" r="3" fill="#d24625" /></Office>
    </Slot>
    <Slot label="Word">
      <Office color="#2a5699" dark="#2a5699" letter="W"><path d="M16 7.500h9M16 10.500h9M16 13.500h9M16 16.500h9M16 19.500h9" stroke="#2a5699" strokeWidth="1.300" /></Office>
    </Slot>
    <div className="w-[62px] h-full ml-px shrink-0 flex flex-col items-center bg-[#4b5a5a]">
      <button aria-label="Excel" className="flex-1 flex items-center pt-[1px]">
        <Office color="#207245" dark="#207245" letter="X"><path d="M16 7.500h9M16 10.500h9M16 13.500h9M16 16.500h9M16 19.500h9M20.500 5v18" stroke="#207245" strokeWidth="1.300" /></Office>
      </button>
      <span className="h-[3px] w-full bg-[#76ceef]" />
    </div>
    <Slot label="Telegram" open>
      <span className="relative">
        <svg width="26" height="26" viewBox="0 0 26 26"><circle cx="13" cy="13" r="13" fill="#2a9fdb" /><path d="M5 13l14.500-6L17 20l-5-3.500-2 2V15l7-6-9 5.500z" fill="#fff" /></svg>
        <span className="absolute left-[11px] top-[14px] w-[19px] h-[14px] rounded bg-[#ef3b3b] text-[11px] leading-[14px] text-center">..13</span>
      </span>
    </Slot>
    <div className="flex-1" />
    <button className="flex items-center text-[17px] whitespace-nowrap w-[162px]">
      <svg width="29" height="18" viewBox="0 0 29 18" className="mr-[11px]"><defs><linearGradient id="cl" x1="0" x2="0" y1="0" y2="1"><stop offset="0" stopColor="#b3cbf6" /><stop offset="1" stopColor="#eef2fa" /></linearGradient></defs><path d="M6 18q-6-1-6-6 1-5 6-5 2-7 9-7 6 1 7 5 7 1 7 7 0 5-6 6z" fill="url(#cl)" /></svg>
      12°C&nbsp; Cloudy
    </button>
    <button aria-label="Приховані піктограми" className="ml-[2px] mr-[12px]"><svg width="16" height="9" viewBox="0 0 16 9" fill="none" stroke="#fff" strokeWidth="1.500"><path d="M.5 8.500L8 1l7.500 7.500" /></svg></button>
    <div className="flex items-center">
      <svg width="19" height="18" viewBox="0 0 19 18" className="mr-[10px]"><rect width="19" height="18" rx="2" fill="#c55a10" /><path d="M0 9l3-4 5 3 11-5v4L8 13zM1 13l7 4 11-7v2L8 18z" fill="#fff" /></svg>
      <svg width="21" height="14" viewBox="0 0 21 14" className="mr-[13px]"><path d="M4 10Q3 6 6 5q2-5 7-5t5 5l1 5z" fill="#a5b0aa" /><path d="M3 14q-3-1-3-4t4-4q4-1 7 2 3-3 7-1 4 3 3 5-1 2-3 2z" fill="#fff" /></svg>
      <svg width="16" height="17" viewBox="0 0 16 17" fill="none" stroke="#ddd" strokeWidth="1.300" className="mr-[12px]"><path d="M1 15Q1 2 15 1M5 16Q5 6 15 5M8.500 16.500Q8 9.500 15 9M12 16.500q0-3 3-3.500" /></svg>
      <svg width="19" height="12" viewBox="0 0 19 12" fill="none" stroke="#fff" className="mr-[9px]"><path d="M.5.500h16v11H.5zM17 4h1.500v4H17" /><path d="M3 3h11v6H3z" fill="#fff" /></svg>
      <svg width="21" height="18" viewBox="0 0 21 18" fill="none" stroke="#fff" strokeWidth="1.200" className="mr-[9px]"><path d="M.6 6v6H4l4 4V2L4 6zM11 6.500q1.500 2.500 0 5M14 4q3.500 5 0 10M17 1.500q5 7.500 0 15" /></svg>
    </div>
    <button className="w-[36px] text-[14px]">ENG</button>
    <button className="w-[94px] text-[14px] leading-[23px]"><time>1:06<br />28.09.2022</time></button>
    <button aria-label="Сповіщення" className="relative w-[57px]">
      <svg width="20" height="19" viewBox="0 0 20 19" className="ml-3"><path d="M0 0h20v16h-5v3l-3-3H0z" fill="#fff" /><path d="M4 4.500h12M4 8h12M4 11.500h8" stroke="#20372f" strokeWidth="1.200" /></svg>
      <span className="absolute left-[21px] top-[25px] size-5 rounded-full bg-[#2b2f2e] border border-[#888] text-[13px] font-bold leading-[18px] text-center">2</span>
    </button>
    <div className="w-[6px] border-l border-[#6b7b73]" />
  </footer>
);

export default function App() {
  return (
    <div className={`h-screen flex flex-col overflow-hidden bg-[#e6e6e6] ${UI}`}>
      <div className="bg-[#217346]">
        <TitleBar />
        <TabBar />
      </div>
      <Ribbon />
      <FormulaBar />
      <main className="flex-1 min-h-0 flex">
        <Sheet />
        <div className="w-[25px] shrink-0 pl-[3px] pt-[2px] flex flex-col">
          <button aria-label="Прокрутити вгору" className={scrollBtn}><Arrow d="M0 6.500h9L4.500 2z" /></button>
          <div className="w-[19px] flex-1 bg-[#dadada] flex flex-col">
            <div className="h-[calc(100%-25px)] bg-white border border-[#ababab]" />
          </div>
          <button aria-label="Прокрутити вниз" className={scrollBtn}><Arrow d="M0 2.500h9L4.500 7z" /></button>
        </div>
      </main>
      <SheetTabs />
      <StatusBar />
      <Taskbar />
    </div>
  );
}
